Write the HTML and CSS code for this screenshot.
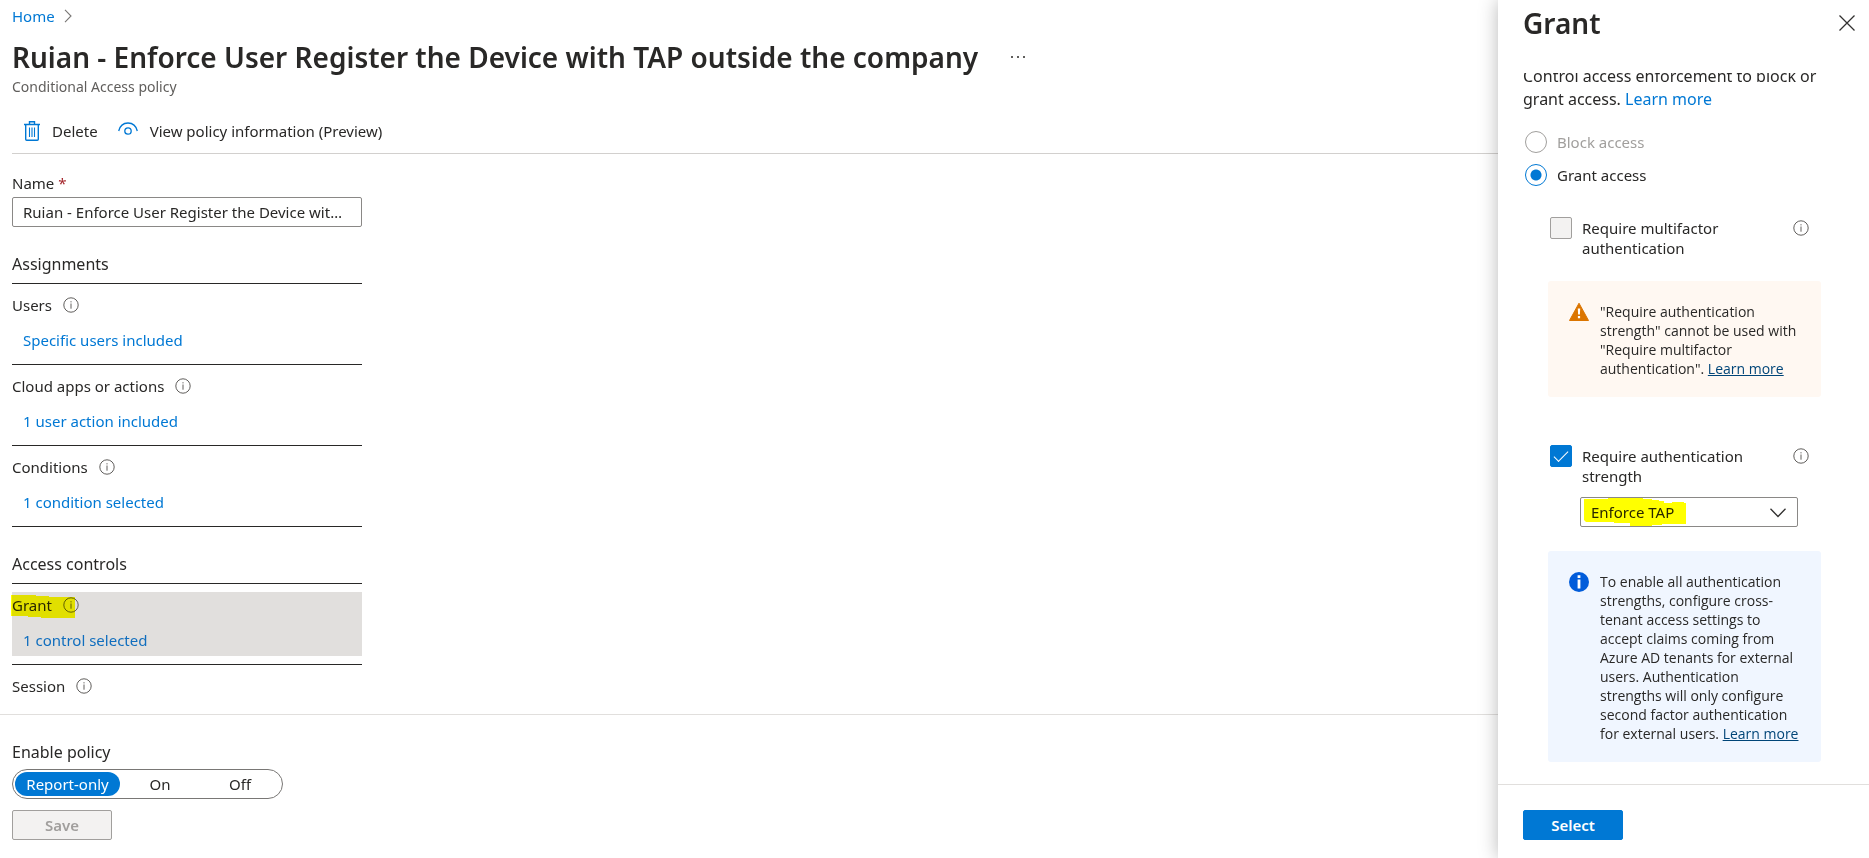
FILE: index.html
```html
<!DOCTYPE html>
<html lang="en">
<head>
    <meta charset="UTF-8">
    <meta name="viewport" content="width=device-width, initial-scale=1.0">
    <title>Conditional Access policy</title>
    <link rel="stylesheet" href="styles.css">
</head>
<body>

    <!-- shared icons -->
    <svg class="sprite" aria-hidden="true">
        <symbol id="info" viewBox="0 0 16 16">
            <circle cx="8" cy="8" r="7.2" fill="none" stroke="#605e5c" stroke-width="1"/>
            <path d="M8 6.5v5.2M8 4.2v1.2" stroke="#605e5c" stroke-width="1" fill="none"/>
        </symbol>
    </svg>

    <main class="policy">
        <header class="policy-header">
            <nav class="breadcrumb">
                <a href="#">Home</a>
                <svg width="8" height="14" viewBox="0 0 8 14"><path d="M1 .8L7 7 1 13.200" fill="none" stroke="#797775" stroke-width="1.1"/></svg>
            </nav>
            <div class="title-row">
                <h1>Ruian - Enforce User Register the Device with TAP outside the company</h1>
                <button class="icon-button" aria-label="More">
                    <svg width="14" height="4" viewBox="0 0 14 4"><path d="M0 1h2v2H0zM6 1h2v2H6zM12 1h2v2h-2z" fill="#605e5c"/></svg>
                </button>
            </div>
            <p class="subtitle">Conditional Access policy</p>
        </header>

        <div class="toolbar">
            <button class="tool">
                <svg width="16" height="20" viewBox="0 0 16 20" fill="none" stroke="#0078d4">
                    <path d="M0 3.500h16M5.500 3V.7h5V3" stroke-width="1.400"/>
                    <path d="M1.700 4v14.300q0 1 1 1h10.600q1 0 1-1V4" stroke-width="1.400"/>
                    <path d="M5.500 6.500v9.500M8 6.500v9.500M10.500 6.500v9.500" stroke-width="1.100"/>
                </svg>
                Delete
            </button>
            <button class="tool">
                <svg width="20" height="20" viewBox="0 0 20 20" fill="none" stroke="#0078d4" stroke-width="1.300">
                    <path d="M.7 10C2 4.500 5.800 2 10 2s8 2.500 9.300 8"/>
                    <circle cx="10" cy="10" r="3.200"/>
                </svg>
                View policy information (Preview)
            </button>
        </div>

        <div class="policy-body">
            <label class="name-label" for="name">Name <span class="required">*</span></label>
            <input class="name-input" id="name" type="text" value="Ruian - Enforce User Register the Device with TAP outside the company">

            <h2>Assignments</h2>
            <section class="item">
                <div class="item-box">
                    <div class="item-label">Users <svg class="info"><use href="#info"/></svg></div>
                    <a href="#">Specific users included</a>
                </div>
            </section>
            <section class="item">
                <div class="item-box">
                    <div class="item-label">Cloud apps or actions <svg class="info"><use href="#info"/></svg></div>
                    <a href="#">1 user action included</a>
                </div>
            </section>
            <section class="item">
                <div class="item-box">
                    <div class="item-label">Conditions <svg class="info"><use href="#info"/></svg></div>
                    <a href="#">1 condition selected</a>
                </div>
            </section>

            <h2>Access controls</h2>
            <section class="item">
                <div class="item-box selected">
                    <div class="item-label">Grant <svg class="info"><use href="#info"/></svg></div>
                    <a href="#">1 control selected</a>
                    <svg class="marker" width="64" height="30" viewBox="0 0 64 30"><path d="M-1 3H24V4H37V5H63V26H29V25H16V24H-1z" fill="#ff0"/></svg>
                </div>
            </section>
            <section class="item">
                <div class="item-box">
                    <div class="item-label">Session <svg class="info"><use href="#info"/></svg></div>
                </div>
            </section>
        </div>

        <footer class="policy-footer">
            <fieldset class="enable">
                <legend>Enable policy</legend>
                <div class="toggle">
                    <label><input type="radio" name="enable" checked><span>Report-only</span></label>
                    <label><input type="radio" name="enable"><span>On</span></label>
                    <label><input type="radio" name="enable"><span>Off</span></label>
                </div>
            </fieldset>
            <button class="button" disabled>Save</button>
        </footer>
    </main>

    <aside class="panel">
        <header class="panel-header">
            <h1>Grant</h1>
            <button class="icon-button" aria-label="Close">
                <svg width="16" height="16" viewBox="0 0 16 16"><path d="M.5.5l15 15M15.500.5l-15 15" stroke="#323130" stroke-width="1.300"/></svg>
            </button>
        </header>

        <div class="panel-body">
            <p class="intro">Control access enforcement to block or grant access. <a href="#">Learn more</a></p>

            <label class="radio off"><input type="radio" name="access" disabled> Block access</label>
            <label class="radio"><input type="radio" name="access" checked> Grant access</label>

            <div class="controls">
                <div class="check">
                    <input type="checkbox" id="mfa" disabled>
                    <label for="mfa">Require multifactor authentication</label>
                    <svg class="info"><use href="#info"/></svg>
                </div>

                <div class="message warning">
                    <svg width="20" height="20" viewBox="0 0 20 20">
                        <path d="M10 1.200L19.500 18.500H.5z" fill="#db7500" stroke="#db7500" stroke-width="1" stroke-linejoin="round"/>
                        <path d="M8.800 6.500h2.400l-.3 6H9.100zM8.900 14h2.200v2.200H8.900z" fill="#fff"/>
                    </svg>
                    <p>"Require authentication strength" cannot be used with "Require multifactor authentication". <a href="#">Learn more</a></p>
                </div>

                <div class="check">
                    <input type="checkbox" id="strength" checked>
                    <label for="strength">Require authentication strength</label>
                    <svg class="info"><use href="#info"/></svg>
                </div>

                <div class="dropdown">
                    <select aria-label="Authentication strength">
                        <option>Enforce TAP</option>
                    </select>
                    <svg class="chevron" width="16" height="10" viewBox="0 0 16 10"><path d="M.5.8L8 8.500 15.500.8" fill="none" stroke="#323130" stroke-width="1.300"/></svg>
                    <svg class="marker" width="110" height="30" viewBox="0 0 110 30"><path d="M4 2H28V1H63V2H72V3H79V4H84V6H92V5H104V6H106V27H82V28H72V29H50V26H34V25H6L4 23z" fill="#ff0"/></svg>
                </div>

                <div class="message note">
                    <svg width="20" height="20" viewBox="0 0 20 20">
                        <circle cx="10" cy="10" r="10" fill="#015cda"/>
                        <path d="M8.600 3.200h2.800v2.800H8.600zM8.600 7.600h2.800v9H8.600z" fill="#fff"/>
                    </svg>
                    <p>To enable all authentication strengths, configure cross-tenant access settings to accept claims coming from Azure AD tenants for external users. Authentication strengths will only configure second factor authentication for external users. <a href="#">Learn more</a></p>
                </div>
            </div>
        </div>

        <footer class="panel-footer">
            <button class="button primary">Select</button>
        </footer>
    </aside>

</body>
</html>
```

FILE: styles.css
```css
* {
    box-sizing: border-box;
}
body {
    display: grid;
    grid-template-columns: 1fr 371px;
    height: 100vh;
    margin: 0;
    overflow: hidden;
    background: #fff;
    color: #292827;
    font-family: "Noto Sans", "Open Sans", sans-serif;
    font-size: 15px;
    line-height: 20px;
}
h1, h2, p {
    margin: 0;
}
h1 {
    font-size: 28px;
    line-height: 36px;
    font-weight: 600;
}
h2 {
    width: 350px;
    margin-top: 25px;
    padding-bottom: 7px;
    border-bottom: 1px solid #292827;
    font-size: 16px;
    line-height: 24px;
    font-weight: 400;
}
a {
    color: #0078d4;
    text-decoration: none;
}
button, input, select {
    font: inherit;
    color: inherit;
}
.sprite {
    position: absolute;
    width: 0;
    height: 0;
}
.info {
    width: 16px;
    height: 16px;
    flex: none;
}
.icon-button {
    display: flex;
    padding: 0;
    border: 0;
    background: none;
}
/* yellow highlighter strokes */
.marker {
    position: absolute;
    top: 0;
    left: 0;
    overflow: visible;
    mix-blend-mode: multiply;
    pointer-events: none;
}

/* policy page */
.policy {
    display: flex;
    flex-direction: column;
    min-width: 0;
    min-height: 0;
}
.policy-header {
    padding: 6px 12px 0;
}
.breadcrumb {
    display: flex;
    align-items: center;
    gap: 9px;
}
.title-row {
    display: flex;
    align-items: center;
    gap: 33px;
    margin-top: 13px;
}
.subtitle {
    margin-top: 2px;
    color: #605e5c;
    font-size: 14px;
}
.toolbar {
    display: flex;
    gap: 20px;
    margin-left: 12px;
    padding: 18px 12px 6px;
    border-bottom: 1px solid #d2d0ce;
}
.tool {
    display: flex;
    align-items: center;
    gap: 12px;
    height: 32px;
    padding: 0;
    border: 0;
    background: none;
}
.policy-body {
    flex: 1;
    min-height: 0;
    padding: 19px 12px 0;
    overflow: hidden;
}
.name-label {
    display: block;
    margin-bottom: 4px;
}
.required {
    color: #a4262c;
}
.name-input {
    display: block;
    width: 350px;
    height: 30px;
    padding: 0 10px;
    border: 1px solid #8a8886;
    border-radius: 2px;
    text-overflow: ellipsis;
}
.item {
    width: 350px;
    padding: 8px 0;
    border-bottom: 1px solid #292827;
}
.item-box {
    position: relative;
    height: 64px;
}
.item-box.selected {
    background: #e1dfdd;
}
.item-box.selected a {
    color: #106ebe;
}
.item-label {
    display: flex;
    align-items: center;
    gap: 11px;
    height: 26px;
}
.item-box a {
    display: block;
    padding: 6px 11px 0;
    line-height: 32px;
}
.policy-footer {
    padding: 25px 12px 18px;
    border-top: 1px solid #e1dfdd;
}
.enable {
    margin: 0 0 11px;
    padding: 0;
    border: 0;
}
.enable legend {
    padding: 0 0 5px;
    font-size: 16px;
    line-height: 24px;
}
.toggle {
    display: flex;
    width: 271px;
    height: 30px;
    padding: 2px;
    border: 1px solid #797775;
    border-radius: 15px;
}
.toggle label {
    flex: 1;
}
.toggle label:first-child {
    flex: none;
    width: 105px;
}
.toggle input {
    position: absolute;
    appearance: none;
    margin: 0;
}
.toggle span {
    display: block;
    border-radius: 12px;
    line-height: 24px;
    text-align: center;
}
.toggle input:checked + span {
    background: #0078d4;
    color: #fff;
}
.button {
    display: block;
    width: 100px;
    height: 30px;
    padding: 0;
    border: 1px solid #a19f9d;
    border-radius: 2px;
    background: #f3f2f1;
    font-weight: 600;
    text-align: center;
}
.button:disabled {
    color: #a19f9d;
}
.button.primary {
    border-color: #0078d4;
    background: #0078d4;
    color: #fff;
}

/* grant panel */
.panel {
    display: flex;
    flex-direction: column;
    min-height: 0;
    background: #fff;
    box-shadow: 0 0 18px rgba(0, 0, 0, 0.28);
    z-index: 1;
}
.panel-header {
    display: flex;
    justify-content: space-between;
    align-items: center;
    height: 73px;
    padding: 0 14px 28px 25px;
}
.panel-body {
    flex: 1;
    min-height: 0;
    padding: 0 48px 0 25px;
    overflow: hidden;
}
.intro {
    margin: -8px -20px 14px 0;
    font-size: 16px;
    line-height: 23px;
}
.radio {
    display: flex;
    align-items: center;
    gap: 10px;
    height: 33px;
    padding-left: 2px;
}
.radio.off {
    color: #a19f9d;
}
.radio input {
    appearance: none;
    width: 22px;
    height: 22px;
    margin: 0;
    border: 1px solid #a19f9d;
    border-radius: 50%;
}
.radio input:checked {
    border-color: #0078d4;
    background: radial-gradient(circle, #0078d4 5px, #fff 6px);
}
.controls {
    padding: 26px 0 0 25px;
}
.check {
    display: flex;
    gap: 10px;
    padding: 0 12px 0 2px;
}
.check label {
    flex: 1;
    padding-top: 1px;
}
.check .info {
    margin-top: 3px;
}
.check input {
    flex: none;
    appearance: none;
    width: 22px;
    height: 22px;
    margin: 0;
    border: 1px solid #a19f9d;
    border-radius: 2px;
    background: #f3f2f1;
}
.check input:checked {
    display: grid;
    place-items: center;
    border-color: #0078d4;
    background: #0078d4;
}
.check input:checked::before {
    content: "";
    width: 13px;
    height: 6px;
    margin-top: -4px;
    border: solid #fff;
    border-width: 0 0 1px 1px;
    transform: rotate(-45deg);
}
.message {
    display: flex;
    gap: 11px;
    padding: 21px 20px 19px 21px;
    border-radius: 3px;
    font-family: "Open Sans", "Noto Sans", sans-serif;
    font-size: 14px;
    line-height: 19px;
}
.message svg {
    flex: none;
}
.message a {
    color: #004578;
    text-decoration: underline;
}
.warning {
    margin: 23px 0 48px;
    background: #fff8f2;
}
.note {
    background: #f0f6ff;
}
.dropdown {
    position: relative;
    width: 218px;
    margin: 11px 0 24px 32px;
}
.dropdown select {
    display: block;
    appearance: none;
    width: 100%;
    height: 30px;
    padding: 0 10px;
    border: 1px solid #8a8886;
    border-radius: 2px;
    background: #fff;
}
.chevron {
    position: absolute;
    top: 11px;
    right: 12px;
    pointer-events: none;
}
.panel-footer {
    padding: 25px 25px 18px;
    border-top: 1px solid #e1dfdd;
}
```
